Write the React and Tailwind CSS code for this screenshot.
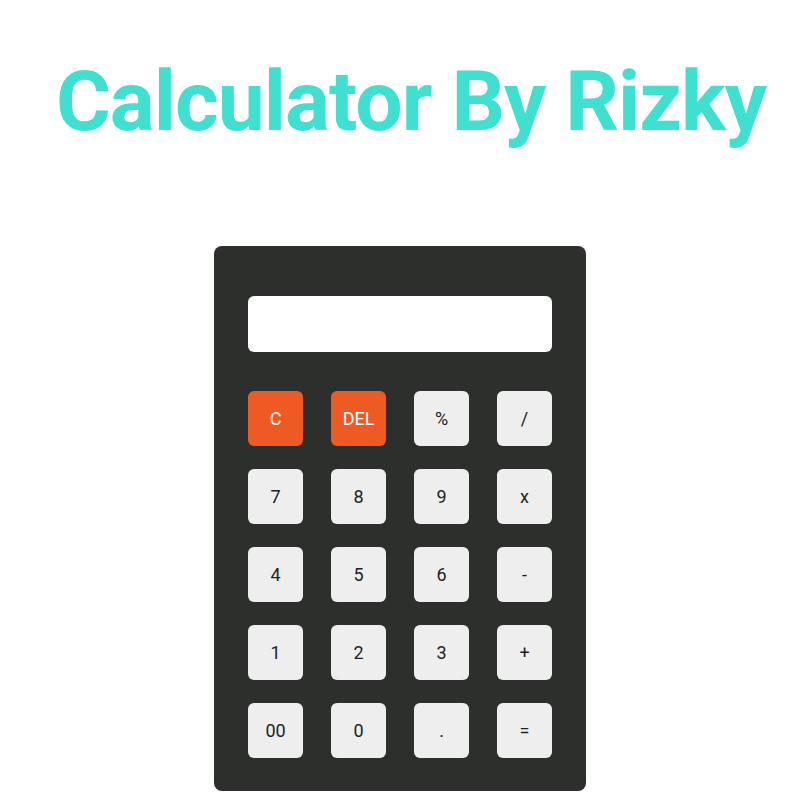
const keys = [
  { label: "C", accent: true },
  { label: "DEL", accent: true },
  { label: "%" },
  { label: "/" },
  { label: "7" },
  { label: "8" },
  { label: "9" },
  { label: "x" },
  { label: "4" },
  { label: "5" },
  { label: "6" },
  { label: "-" },
  { label: "1" },
  { label: "2" },
  { label: "3" },
  { label: "+" },
  { label: "00" },
  { label: "0" },
  { label: "." },
  { label: "=" },
];

export default function App() {
  return (
    <div className="min-h-[801px] bg-white flex flex-col items-center font-['Roboto',sans-serif]">
      <h1 className="pt-[53px] ml-[22px] text-[84px] leading-[1.172] font-bold tracking-[-1px] text-[#40e0d0] whitespace-nowrap">
        Calculator By Rizky
      </h1>

      <div className="mt-[95px] w-[372px] bg-[#2c2f2c] rounded-lg px-[34px] pt-[50px] pb-[33px]">
        <div className="h-[56px] bg-white rounded-md" />
        <div className="mt-[39px] grid grid-cols-4 gap-x-[28px] gap-y-[23px]">
          {keys.map((k) => (
            <button
              key={k.label}
              className={
                "h-[55px] w-[55px] rounded-md flex items-center justify-center text-[18px] " +
                (k.accent ? "bg-[#ee5a24] text-white" : "bg-[#eeeeee] text-[#222]")
              }
            >
              {k.label}
            </button>
          ))}
        </div>
      </div>
    </div>
  );
}
